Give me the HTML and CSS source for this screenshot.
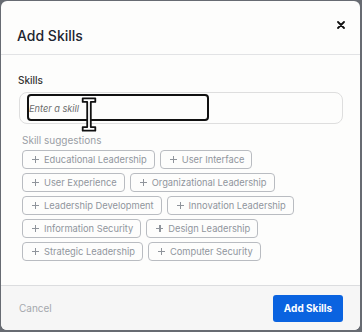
FILE: index.html
```html
<!DOCTYPE html>
<html lang="en">
<head>
  <meta charset="UTF-8">
  <meta name="viewport" content="width=device-width, initial-scale=1.0">
  <title>Add Skills</title>
  <link rel="stylesheet" href="styles.css">
</head>
<body>
  <div class="modal">
    <div class="modal-header">
      <h2>Add Skills</h2>
      <button class="close-btn" aria-label="Close">
        <svg width="8" height="8" viewBox="0 0 8 8"><path d="M1 1L7 7M7 1L1 7" stroke="#111" stroke-width="1.8" stroke-linecap="round"/></svg>
      </button>
    </div>

    <div class="modal-body">
      <label for="skill" class="field-label">Skills</label>
      <div class="input-wrap">
        <input type="text" id="skill" placeholder="Enter a skill">
        <div class="focus-ring"></div>
        <svg class="ibeam" width="20" height="40" viewBox="0 0 20 40">
          <path d="M3 2H17V6H12V34H17V38H3V34H8V6H3Z" fill="#fff" stroke="#111" stroke-width="2" stroke-linejoin="round"/>
        </svg>
      </div>

      <div class="suggest-label">Skill suggestions</div>
      <div class="chips">
        <button class="chip"><span class="plus"></span>Educational Leadership</button>
        <button class="chip"><span class="plus"></span>User Interface</button>
        <button class="chip"><span class="plus"></span>User Experience</button>
        <button class="chip"><span class="plus"></span>Organizational Leadership</button>
        <button class="chip"><span class="plus"></span>Leadership Development</button>
        <button class="chip"><span class="plus"></span>Innovation Leadership</button>
        <button class="chip"><span class="plus"></span>Information Security</button>
        <button class="chip"><span class="plus"></span>Design Leadership</button>
        <button class="chip"><span class="plus"></span>Strategic Leadership</button>
        <button class="chip"><span class="plus"></span>Computer Security</button>
      </div>
    </div>

    <div class="modal-footer">
      <button class="cancel-btn">Cancel</button>
      <button class="primary-btn">Add Skills</button>
    </div>
  </div>
</body>
</html>
```

FILE: styles.css
```css
html, body {
  height: 100%;
}
body {
  margin: 0;
  padding: 1px 2px 2px 1px;
  box-sizing: border-box;
  background: #676b72;
  font-family: Inter, "Noto Sans", sans-serif;
  color: #333;
}
.modal {
  height: 100%;
  background: #fdfdfc;
  border-radius: 6px;
  overflow: hidden;
  display: flex;
  flex-direction: column;
}
.modal-header {
  position: relative;
  height: 53px;
  border-bottom: 1px solid #e2e3e5;
  padding: 0 16px;
  display: flex;
  align-items: flex-end;
}
.modal-header h2 {
  margin: 0 0 10px;
  font-size: 14px;
  font-weight: 500;
  color: #1e2530;
}
.close-btn {
  position: absolute;
  top: 14px;
  right: 13px;
  border: none;
  background: none;
  padding: 2px;
  cursor: pointer;
}
.modal-body {
  flex: 1;
  padding: 19px 17px 0 17px;
}
.field-label {
  display: block;
  font-size: 10px;
  font-weight: 500;
  color: #333;
  margin-bottom: 6px;
}
.input-wrap {
  position: relative;
  margin-left: 1px;
}
.input-wrap input {
  width: 100%;
  box-sizing: border-box;
  height: 32px;
  border: 1px solid #dedede;
  border-radius: 8px;
  background: #fdfdfc;
  padding: 0 9px;
  font-family: Inter, sans-serif;
  font-size: 9.2px;
  outline: none;
}
.input-wrap input::placeholder {
  font-style: italic;
  color: #6c6c6c;
}
.focus-ring {
  position: absolute;
  left: 8px;
  top: 2px;
  width: 178px;
  height: 23px;
  border: 2px solid #111;
  border-radius: 4px;
  pointer-events: none;
}
.ibeam {
  position: absolute;
  left: 61px;
  top: 3px;
  width: 18px;
  height: 39px;
}
.suggest-label {
  margin: 10px 0 4px 4px;
  font-size: 10px;
  color: #9a9ea5;
}
.chips {
  display: flex;
  flex-wrap: wrap;
  gap: 4px 5px;
  padding-left: 4px;
  padding-right: 40px;
}
.chip {
  display: flex;
  align-items: center;
  gap: 5px;
  height: 19px;
  padding: 0 7px 0 9px;
  border: 1px solid #b9bcc1;
  border-radius: 4px;
  background: #fdfdfc;
  font-family: Inter, sans-serif;
  font-size: 9.3px;
  color: #90959c;
  cursor: pointer;
}
.plus {
  position: relative;
  width: 7px;
  height: 7px;
}
.plus::before, .plus::after {
  content: "";
  position: absolute;
  background: #8f949b;
}
.plus::before {
  left: 0;
  top: 3px;
  width: 7px;
  height: 1.4px;
}
.plus::after {
  left: 3px;
  top: 0;
  width: 1.4px;
  height: 7px;
}
.modal-footer {
  height: 44px;
  border-top: 1px solid #dcdddf;
  background: #f6f6f6;
  display: flex;
  align-items: center;
  justify-content: space-between;
  padding: 0 17px 0 18px;
}
.cancel-btn {
  border: none;
  background: none;
  padding: 0;
  font-family: Inter, sans-serif;
  font-size: 10px;
  color: #a5a8ad;
  cursor: pointer;
}
.primary-btn {
  width: 70px;
  height: 27px;
  border: none;
  border-radius: 3px;
  background: #0a63e0;
  color: #fff;
  font-family: Inter, sans-serif;
  font-size: 10px;
  font-weight: 700;
  cursor: pointer;
}
```
